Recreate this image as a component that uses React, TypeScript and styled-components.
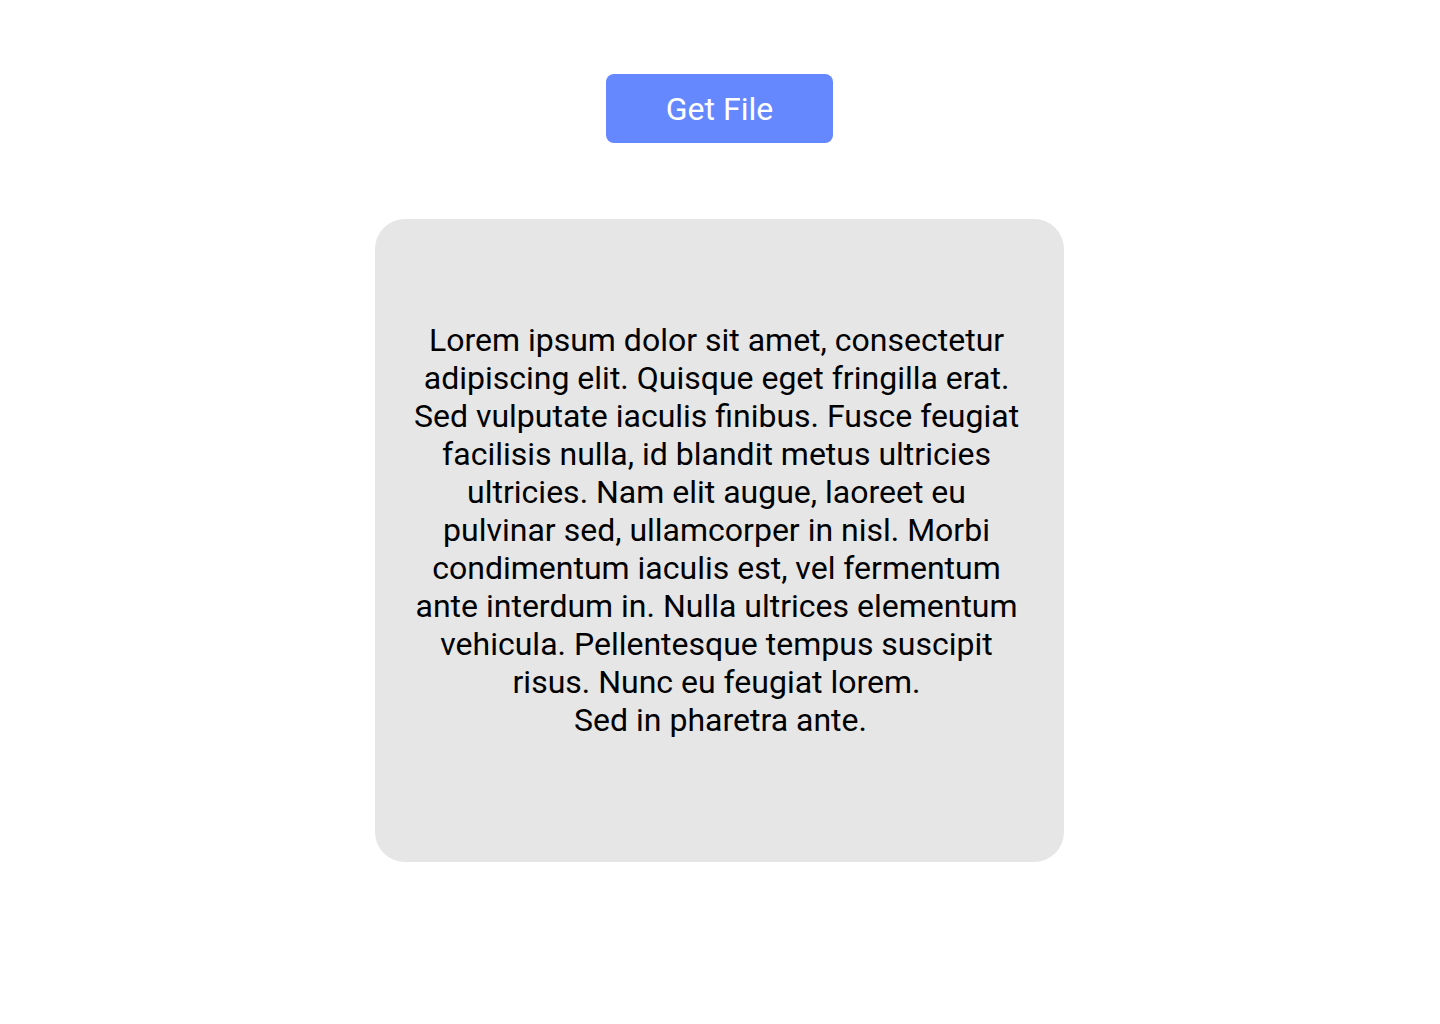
import React from "react";
import styled, { createGlobalStyle } from "styled-components";

const Global = createGlobalStyle`
  html, body { margin: 0; padding: 0; background: #ffffff; }
  body { font-family: Roboto, "Liberation Sans", sans-serif; }
`;

const Page = styled.main`
  display: flex;
  flex-direction: column;
  align-items: center;
  padding-top: 74px;
  padding-right: 1px;
`;

const Button = styled.button`
  width: 227px;
  height: 69px;
  padding: 0;
  border: none;
  border-radius: 8px;
  background: #6688ff;
  color: #ffffff;
  font-family: Roboto, "Liberation Sans", sans-serif;
  font-size: 32px;
  cursor: pointer;
`;

const Card = styled.section`
  box-sizing: border-box;
  margin-top: 76px;
  width: 689px;
  height: 643px;
  padding: 102px 35px 0 37px;
  background: #e6e6e6;
  border-radius: 30px;
`;

const Text = styled.p`
  margin: 0;
  font-size: 32px;
  line-height: 38px;
  text-align: center;
  white-space: break-spaces;
  color: #000000;
`;

export default function App() {
  return (
    <>
      <Global />
      <Page>
        <Button>Get File</Button>
        <Card>
          <Text>
            {"Lorem ipsum dolor sit amet, consectetur adipiscing elit. Quisque eget fringilla erat. Sed vulputate iaculis finibus. Fusce feugiat facilisis nulla, id blandit metus ultricies ultricies. Nam elit augue, laoreet eu pulvinar sed, ullamcorper in nisl. Morbi condimentum iaculis est, vel fermentum ante interdum in. Nulla ultrices elementum vehicula. Pellentesque tempus suscipit risus. Nunc eu feugiat lorem. "}
            <br />
            Sed in pharetra ante.
          </Text>
        </Card>
      </Page>
    </>
  );
}
